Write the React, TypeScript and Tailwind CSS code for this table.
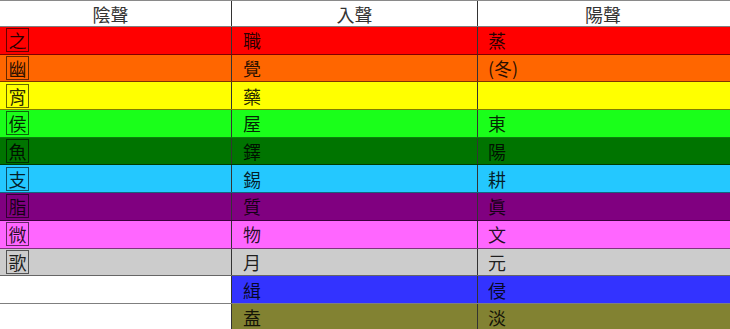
import React from "react";

type Row = { bg: string; a: string; b: string; c: string; blank?: boolean };

const rows: Row[] = [
  { bg: "bg-[#ff0000]", a: "之", b: "職", c: "蒸" },
  { bg: "bg-[#ff6600]", a: "幽", b: "覺", c: "(冬)" },
  { bg: "bg-[#ffff00]", a: "宵", b: "藥", c: "" },
  { bg: "bg-[#1aff1a]", a: "侯", b: "屋", c: "東" },
  { bg: "bg-[#007400]", a: "魚", b: "鐸", c: "陽" },
  { bg: "bg-[#24c8ff]", a: "支", b: "錫", c: "耕" },
  { bg: "bg-[#800080]", a: "脂", b: "質", c: "眞" },
  { bg: "bg-[#ff66ff]", a: "微", b: "物", c: "文" },
  { bg: "bg-[#cccccc]", a: "歌", b: "月", c: "元" },
  { bg: "bg-[#3333ff]", a: "", b: "緝", c: "侵", blank: true },
  { bg: "bg-[#828232]", a: "", b: "盍", c: "淡", blank: true },
];

const font = { fontFamily: '"Noto Sans CJK TC", "Noto Sans CJK SC", sans-serif' };

export default function App() {
  return (
    <div className="w-[730px] h-[329px] overflow-hidden bg-white text-[18px] leading-none" style={font}>
      <div className="grid grid-cols-[232px_246px_1fr] h-[27px] border-t border-b border-t-[#8a8a8a] border-b-black/50 bg-white text-[#333]">
        <div className="flex items-center justify-center pr-[10px] border-r border-[#333]">陰聲</div>
        <div className="flex items-center justify-center border-r border-[#333]">入聲</div>
        <div className="flex items-center justify-center pr-[2px]">陽聲</div>
      </div>
      {rows.map((r, i) => (
        <div
          key={i}
          className={`grid grid-cols-[232px_246px_1fr] h-[27.7px] border-b border-black/50 text-black/85 ${r.blank ? "" : r.bg}`}
        >
          <div className={`flex items-center pl-[6px] border-r border-[#333] ${r.blank ? "bg-white" : ""}`}>
            {r.a && (
              <span className="w-[23px] h-[24px] flex items-center justify-center border border-black/60">
                {r.a}
              </span>
            )}
          </div>
          <div className={`flex items-center pl-[11px] border-r border-[#333] ${r.blank ? r.bg : ""}`}>{r.b}</div>
          <div className={`flex items-center pl-[10px] ${r.blank ? r.bg : ""}`}>{r.c}</div>
        </div>
      ))}
    </div>
  );
}
